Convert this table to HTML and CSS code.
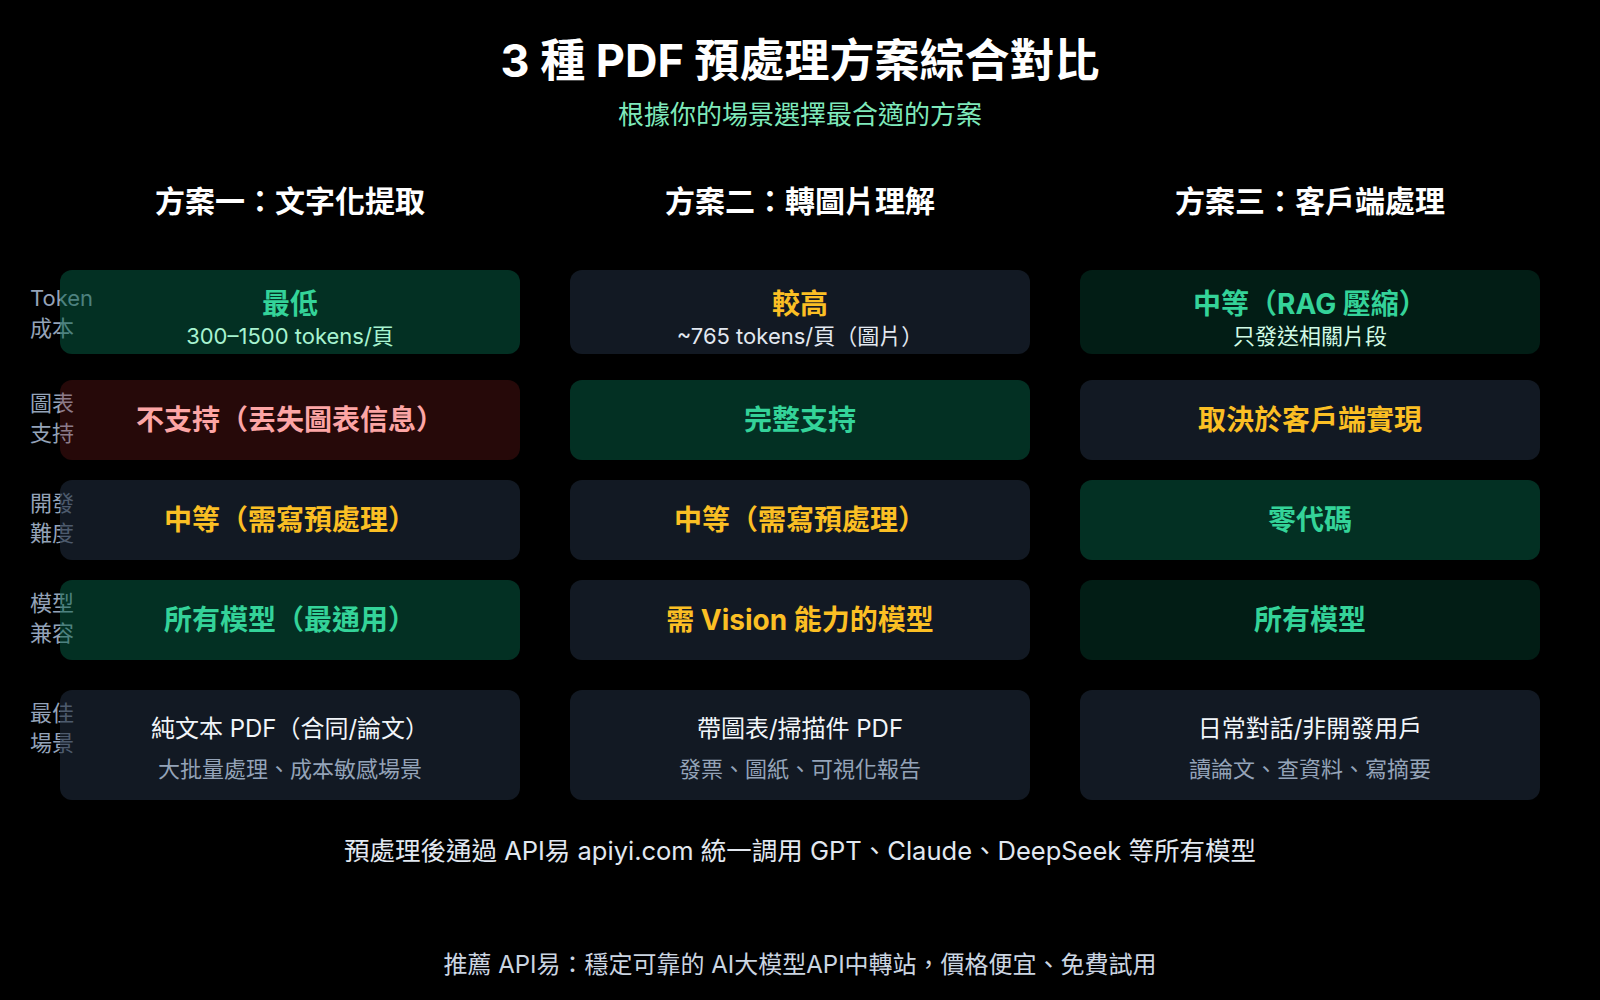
FILE: index.html
```html
<!DOCTYPE html>
<html lang="zh-Hant">
<head>
<meta charset="utf-8">
<title>3 種 PDF 預處理方案綜合對比</title>
<link rel="stylesheet" href="styles.css">
</head>
<body>
<div class="page">
  <h1 class="title">3 種 PDF 預處理方案綜合對比</h1>
  <div class="subtitle">根據你的場景選擇最合適的方案</div>

  <div class="heads">
    <div class="head">方案一：文字化提取</div>
    <div class="head">方案二：轉圖片理解</div>
    <div class="head">方案三：客戶端處理</div>
  </div>

  <div class="rows">
    <div class="row row-first">
      <div class="label label-first">Token<br>成本</div>
      <div class="card g top"><div class="main tg">最低</div><div class="sub sg">300–1500 tokens/頁</div></div>
      <div class="card n top"><div class="main ty">較高</div><div class="sub sw">~765 tokens/頁（圖片）</div></div>
      <div class="card gd top"><div class="main tg">中等（RAG 壓縮）</div><div class="sub sm">只發送相關片段</div></div>
    </div>
    <div class="row row-second">
      <div class="label">圖表<br>支持</div>
      <div class="card r"><div class="main tr">不支持（丟失圖表信息）</div></div>
      <div class="card g"><div class="main tg">完整支持</div></div>
      <div class="card n"><div class="main ty">取決於客戶端實現</div></div>
    </div>
    <div class="row">
      <div class="label">開發<br>難度</div>
      <div class="card n"><div class="main ty">中等（需寫預處理）</div></div>
      <div class="card n"><div class="main ty">中等（需寫預處理）</div></div>
      <div class="card g"><div class="main tg">零代碼</div></div>
    </div>
    <div class="row">
      <div class="label">模型<br>兼容</div>
      <div class="card g"><div class="main tg">所有模型（最通用）</div></div>
      <div class="card n"><div class="main ty">需 Vision 能力的模型</div></div>
      <div class="card gd"><div class="main tg">所有模型</div></div>
    </div>
    <div class="row row-last">
      <div class="label">最佳<br>場景</div>
      <div class="card n scene-card"><div class="scene">純文本 PDF（合同/論文）</div><div class="scene-sub">大批量處理、成本敏感場景</div></div>
      <div class="card n scene-card"><div class="scene">帶圖表/掃描件 PDF</div><div class="scene-sub">發票、圖紙、可視化報告</div></div>
      <div class="card n scene-card"><div class="scene">日常對話/非開發用戶</div><div class="scene-sub">讀論文、查資料、寫摘要</div></div>
    </div>
  </div>

  <div class="note">預處理後通過 API易 apiyi.com 統一調用 GPT、Claude、DeepSeek 等所有模型</div>
  <div class="promo">推薦 API易：穩定可靠的 AI大模型API中轉站，價格便宜、免費試用</div>
</div>
</body>
</html>
```

FILE: styles.css
```css
html, body {
  margin: 0;
  padding: 0;
  background: #000;
}

body {
  font-family: Inter, "Noto Sans CJK TC", "Noto Sans", sans-serif;
  color: #fff;
  width: 1600px;
  height: 1000px;
  overflow: hidden;
}

.page {
  width: 1600px;
  height: 1000px;
  display: flex;
  flex-direction: column;
  align-items: center;
}

.title {
  margin: 35px 0 0;
  font-size: 45px;
  line-height: 52px;
  font-weight: 700;
  color: #fff;
}

.subtitle {
  margin-top: 11px;
  font-size: 26px;
  line-height: 34px;
  color: #7fe9bb;
}

.heads {
  margin-top: 49px;
  width: 1480px;
  display: grid;
  grid-template-columns: repeat(3, 460px);
  column-gap: 50px;
}

.head {
  text-align: center;
  font-size: 30px;
  line-height: 40px;
  font-weight: 700;
  color: #fff;
}

.rows {
  margin-top: 49px;
  width: 1480px;
  display: flex;
  flex-direction: column;
}

.row {
  position: relative;
  display: grid;
  grid-template-columns: repeat(3, 460px);
  column-gap: 50px;
  height: 80px;
  margin-top: 20px;
}

.row-first {
  margin-top: 0;
  height: 84px;
}

.row-second {
  margin-top: 26px;
}

.row-last {
  margin-top: 30px;
  height: 110px;
}

.label {
  position: absolute;
  left: -30px;
  top: 8px;
  font-size: 22px;
  line-height: 30px;
  color: #94a3b8;
}

.label-first {
  top: 13px;
}

.card {
  position: relative;
  z-index: 1;
  border-radius: 12px;
  display: flex;
  flex-direction: column;
  align-items: center;
  justify-content: center;
  text-align: center;
  box-sizing: border-box;
}

.card.top {
  justify-content: flex-start;
  padding-top: 18px;
}

.card.scene-card {
  padding-top: 6px;
}

.g { background: rgba(6, 95, 70, 0.5); }
.gd { background: rgba(6, 95, 70, 0.3); }
.r { background: rgba(127, 29, 29, 0.3); }
.n { background: rgba(30, 41, 59, 0.6); }

.main {
  font-size: 28px;
  line-height: 32px;
  font-weight: 700;
}

.tg { color: #34d399; }
.ty { color: #fbbf24; }
.tr { color: #fca5a5; }

.sub {
  margin-top: 2px;
  font-size: 22px;
  line-height: 28px;
}

.sg { color: #a7f3d0; }
.sw { color: #e2e8f0; }
.sm { color: #d1fae5; }

.scene {
  font-size: 24px;
  line-height: 32px;
  color: #f1f5f9;
}

.scene-sub {
  margin-top: 10px;
  font-size: 22px;
  line-height: 28px;
  color: #94a3b8;
}

.note {
  margin-top: 35px;
  font-size: 25.5px;
  line-height: 32px;
  color: #e2e8f0;
}

.promo {
  margin-top: 82px;
  font-size: 24px;
  line-height: 32px;
  color: #cbd5e1;
}
```
